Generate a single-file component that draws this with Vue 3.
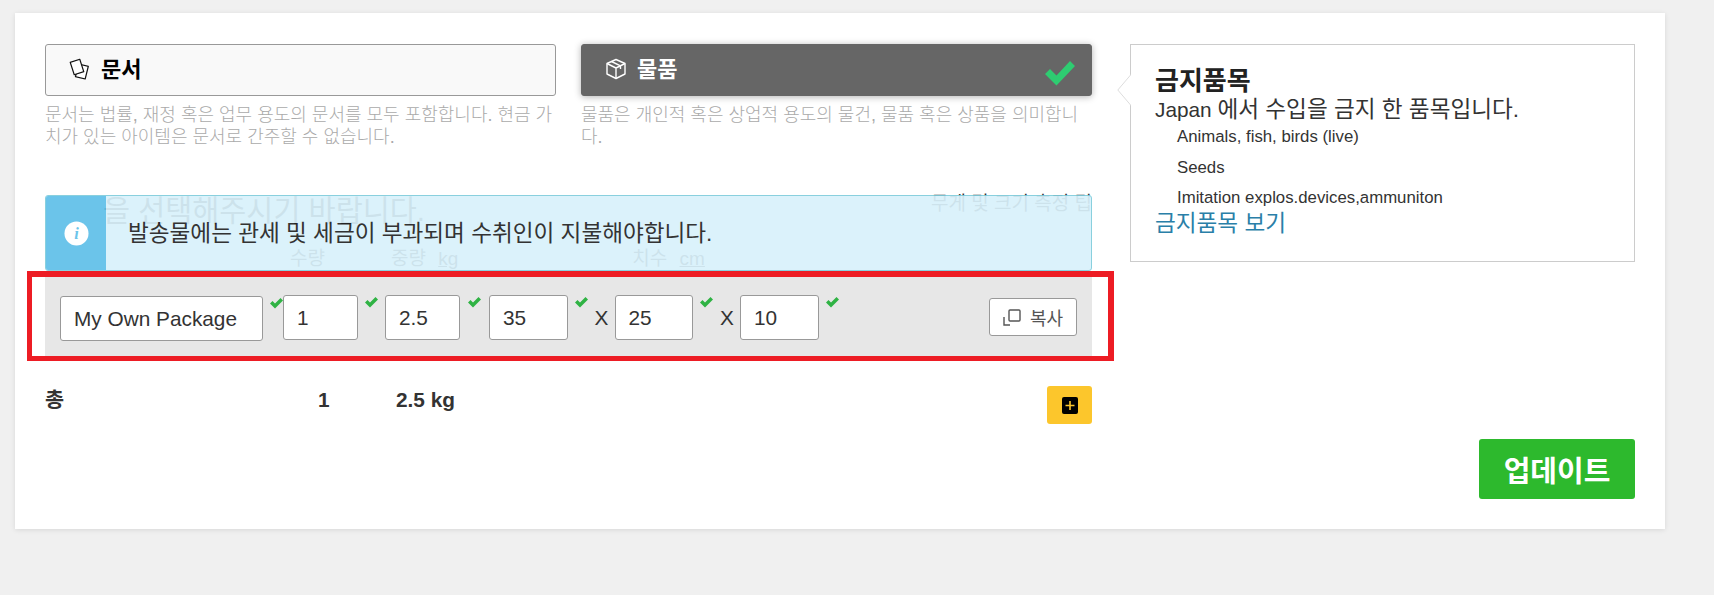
<script setup>
const choices = [
  { key: 'doc', title: '문서', selected: false, text: '문서는 법률, 재정 혹은 업무 용도의 문서를 모두 포함합니다. 현금 가치가 있는 아이템은 문서로 간주할 수 없습니다.' },
  { key: 'box', title: '물품', selected: true, text: '물품은 개인적 혹은 상업적 용도의 물건, 물품 혹은 상품을 의미합니다.' }
]
const banned = ['Animals, fish, birds (live)', 'Seeds', 'Imitation explos.devices,ammuniton']
</script>

<template>
  <div class="page">
    <div class="card">
      <main class="main">
        <div class="choices">
          <div v-for="c in choices" :key="c.key" class="choice">
            <div class="choice-btn" :class="{ on: c.selected }">
              <svg v-if="c.key === 'doc'" class="ic" viewBox="0 0 22 22" fill="#fff" stroke="#111" stroke-width="1.2" stroke-linejoin="round">
                <rect x="8" y="7" width="10" height="13" transform="rotate(14 13 13)" />
                <rect x="3" y="2.5" width="10" height="13" transform="rotate(-18 8 9)" />
              </svg>
              <svg v-else class="ic" viewBox="0 0 22 22" fill="none" stroke="#fff" stroke-width="1.4" stroke-linejoin="round">
                <path d="M11 1.5 20 5.5V16L11 20.5 2 16V5.5Z" />
                <path d="M2 5.5 11 10 20 5.5M11 10V20.5M6.5 3.5 15.5 7.8V11" />
              </svg>
              <span class="choice-title">{{ c.title }}</span>
              <svg v-if="c.selected" class="big-check" viewBox="0 0 32 26"><path d="M1 14 6 9 12.5 15.5 26 1 31 6 12.5 25.5Z" fill="#2ecc71" /></svg>
            </div>
            <p class="desc">{{ c.text }}</p>
          </div>
        </div>

        <section class="notice-wrap">
          <div class="ghost-head">
            <h2>을 선택해주시기 바랍니다.</h2>
            <span class="tip">무게 및 크기 측정 팁</span>
          </div>
          <div class="ghost-labels">
            <span class="l-qty">수량</span>
            <span class="l-wt">중량 <u>kg</u></span>
            <span class="l-dim">치수 <u>cm</u></span>
          </div>
          <div class="notice">
            <div class="notice-side">
              <svg class="info" viewBox="0 0 26 26">
                <circle cx="13" cy="13" r="12.5" fill="#fff" />
                <text x="13" y="19" text-anchor="middle" class="info-i">i</text>
              </svg>
            </div>
            <p>발송물에는 관세 및 세금이 부과되며 수취인이 지불해야합니다.</p>
          </div>
        </section>

        <div class="pkg-row">
          <input class="inp name" value="My Own Package" />
          <svg class="chk c1" viewBox="0 0 15 12"><path d="M1 6.5 3.5 4 6 6.5 11.5 1 14 3.5 6 11.5Z" /></svg>
          <input class="inp qty" value="1" />
          <svg class="chk c2" viewBox="0 0 15 12"><path d="M1 6.5 3.5 4 6 6.5 11.5 1 14 3.5 6 11.5Z" /></svg>
          <input class="inp wt" value="2.5" />
          <svg class="chk c3" viewBox="0 0 15 12"><path d="M1 6.5 3.5 4 6 6.5 11.5 1 14 3.5 6 11.5Z" /></svg>
          <input class="inp len" value="35" />
          <svg class="chk c4" viewBox="0 0 15 12"><path d="M1 6.5 3.5 4 6 6.5 11.5 1 14 3.5 6 11.5Z" /></svg>
          <span class="x">X</span>
          <input class="inp dim" value="25" />
          <svg class="chk c4" viewBox="0 0 15 12"><path d="M1 6.5 3.5 4 6 6.5 11.5 1 14 3.5 6 11.5Z" /></svg>
          <span class="x">X</span>
          <input class="inp dim" value="10" />
          <svg class="chk c4" viewBox="0 0 15 12"><path d="M1 6.5 3.5 4 6 6.5 11.5 1 14 3.5 6 11.5Z" /></svg>
          <button class="copy">
            <svg viewBox="0 0 18 17" fill="none" stroke="#555" stroke-width="1.4"><rect x="6" y="1" width="11" height="11" rx="1" /><path d="M1 8V16H7" /></svg>
            복사
          </button>
        </div>

        <div class="total">
          <b class="t-label">총</b>
          <b class="t-qty">1</b>
          <b class="t-wt">2.5 kg</b>
          <button class="add">
            <svg viewBox="0 0 16 17"><rect x="0" y="0" width="16" height="17" rx="2" fill="#000" /><path d="M8 4V13M3.5 8.5H12.5" stroke="#fcc62c" stroke-width="1.6" /></svg>
          </button>
        </div>
      </main>

      <aside class="side">
        <div class="panel">
          <svg class="arrow" viewBox="0 0 14 32"><path d="M14 0.5 0.8 16 14 31.5" fill="#fff" stroke="#ddd" /></svg>
          <h3>금지품목</h3>
          <p class="lead">Japan <span class="ko">에서 수입을 금지 한 품목입니다.</span></p>
          <ul>
            <li v-for="b in banned" :key="b">{{ b }}</li>
          </ul>
          <a class="link">금지품목 보기</a>
        </div>
        <button class="update">업데이트</button>
      </aside>
    </div>
  </div>
</template>

<style>
html, body { margin: 0; background: #f0f0f0; }
</style>

<style scoped>
.page {
  height: 595px;
  padding: 13px 49px 0 15px;
  box-sizing: border-box;
  font-family: "Liberation Sans", "Noto Sans CJK KR", sans-serif;
  color: #333;
  overflow: hidden;
}
.card {
  display: flex;
  gap: 38px;
  background: #fff;
  padding: 31px 30px 30px;
  box-shadow: 0 1px 5px rgba(0, 0, 0, .1);
}
.main { width: 1047px; flex: none; }
.choices { display: flex; gap: 25px; }
.choice { width: 511px; }
.choice-btn {
  height: 52px;
  box-sizing: border-box;
  display: flex;
  align-items: center;
  gap: 10px;
  padding: 0 0 3px 23px;
  border: 1px solid #999;
  border-radius: 3px;
  background: #f9f9f9;
  color: #000;
  font-size: 22px;
  font-weight: 700;
}
.choice-title { margin-bottom: 4px; }
.choice-btn.on {
  position: relative;
  background: #666;
  border-color: #666;
  color: #fff;
  box-shadow: 0 1px 7px rgba(0, 0, 0, .3);
}
.ic { width: 22px; height: 22px; }
.big-check { position: absolute; right: 15px; top: 15px; width: 32px; height: 26px; }
.desc {
  margin: 8px 0 0;
  font-size: 18px;
  line-height: 22px;
  color: #aaa;
  font-weight: 300;
  height: 44px;
}
.notice-wrap {
  position: relative;
  margin-top: 47px;
  height: 76px;
}
.ghost-head {
  display: flex;
  justify-content: space-between;
  padding-left: 58px;
  height: 52px;
}
.ghost-head h2 { margin: 0; font-size: 29.4px; line-height: 32px; font-weight: 400; color: #333; }
.tip { font-size: 19px; line-height: 18px; color: #333; }
.ghost-labels { display: flex; font-size: 19px; line-height: 24px; color: #333; word-spacing: 7px; }
.l-qty { margin-left: 245px; }
.l-wt { margin-left: 66px; }
.l-dim { margin-left: 174px; }
.notice {
  position: absolute;
  inset: 0;
  display: flex;
  align-items: center;
  box-sizing: border-box;
  background: #d9f1fb;
  border: 1px solid #7fcddc;
  border-radius: 3px;
  opacity: .92;
  overflow: hidden;
}
.notice-side {
  flex: none;
  width: 60px;
  height: 100%;
  background: #5fbfe9;
  display: flex;
  align-items: center;
  justify-content: center;
}
.notice p { margin: -4px 0 0 22px; font-size: 22.6px; color: #222; }
.info { width: 25px; height: 25px; }
.info-i { font: italic 700 17px "Liberation Serif", serif; fill: #5fbfe9; }
.pkg-row {
  position: relative;
  margin-top: 6px;
  height: 79px;
  box-sizing: border-box;
  background: #e7e7e7;
  display: flex;
  align-items: flex-start;
  padding: 18px 15px 0;
}
.pkg-row::after {
  content: "";
  position: absolute;
  inset: -6px -22px -5px -18px;
  border: solid #ed1c24;
  border-width: 6px 6px 5px 5px;
  pointer-events: none;
}
.inp {
  box-sizing: border-box;
  height: 45px;
  border: 1px solid #999;
  border-radius: 3px;
  background: #fff;
  font: 20.8px "Liberation Sans", sans-serif;
  color: #333;
  padding: 0 0 0 13px;
  outline: none;
}
.name { width: 203px; margin-top: 1px; }
.qty { width: 75px; }
.wt { width: 75px; }
.len { width: 78.5px; }
.dim { width: 78.5px; }
.chk { flex: none; width: 15px; height: 12px; margin: 1px 0 0 6px; fill: #2fb344; }
.c1 { margin-right: -1px; margin-top: 2px; }
.c2 { margin-right: 6px; }
.c3 { margin-right: 7px; margin-left: 7px; }
.x { width: 15px; margin: 10px 5px 0 6px; font-size: 20.8px; line-height: 26px; }
.copy {
  margin: 3px 0 0 auto;
  width: 88px;
  height: 38px;
  display: flex;
  align-items: center;
  justify-content: center;
  gap: 9px;
  padding: 0;
  background: #fff;
  border: 1px solid #999;
  border-radius: 3px;
  font: 18px "Liberation Sans", "Noto Sans CJK KR", sans-serif;
  color: #555;
}
.copy svg { width: 18px; height: 17px; }
.total {
  margin-top: 30px;
  display: flex;
  align-items: flex-start;
  font-size: 20.8px;
  line-height: 28px;
  color: #333;
}
.t-label { width: 273px; }
.t-qty { width: 78px; }
.add {
  margin-left: auto;
  width: 45px;
  height: 38px;
  padding: 0;
  border: 0;
  border-radius: 3px;
  background: #fcc62c;
  display: flex;
  align-items: center;
  justify-content: center;
}
.add svg { width: 16px; height: 17px; }
.side {
  width: 505px;
  flex: none;
  display: flex;
  flex-direction: column;
  align-items: flex-end;
}
.panel {
  position: relative;
  width: 100%;
  height: 218px;
  box-sizing: border-box;
  border: 1px solid #ccc;
  padding: 21px 24px;
}
.arrow { position: absolute; left: -14px; top: 29px; width: 14px; height: 32px; }
.panel h3 { margin: 0; font-size: 26px; line-height: 31px; color: #222; }
.lead { margin: 0; font-size: 20.8px; line-height: 25px; }
.ko { font-size: 22.6px; }
.panel ul { list-style: none; margin: 0; padding: 0 0 0 22px; font-size: 16.8px; line-height: 30.5px; }
.link { display: block; margin-top: -3px; font-size: 22.6px; line-height: 26px; color: #2a7fa8; }
.update {
  margin-top: 177px;
  width: 156px;
  height: 60px;
  border: 0;
  border-radius: 3px;
  background: #2db92d;
  color: #fff;
  font: 700 29px "Liberation Sans", "Noto Sans CJK KR", sans-serif;
}
</style>
